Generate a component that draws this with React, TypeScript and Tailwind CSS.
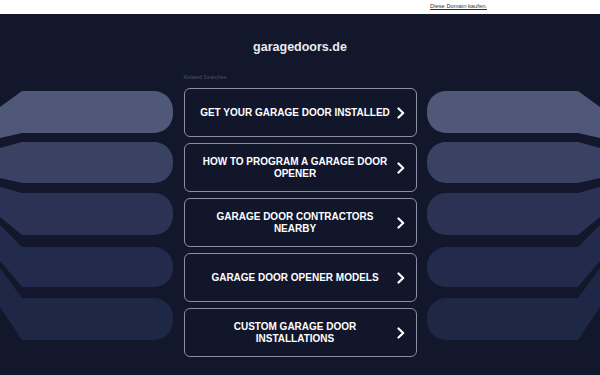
import React from "react";

const rows = [
  { T: 91, B: 133, Tp: 107, Bp: 138, c: "#4f5878" },
  { T: 142, B: 183, Tp: 148, Bp: 178, c: "#3a4264" },
  { T: 193, B: 235, Tp: 187, Bp: 217, c: "#2b3253" },
  { T: 247, B: 287, Tp: 225, Bp: 261, c: "#232b4c" },
  { T: 298, B: 340, Tp: 268, Bp: 307, c: "#1f2746" },
];

function leftPath(r: { T: number; B: number; Tp: number; Bp: number }) {
  const rad = 19;
  return `M0 ${r.Tp} L22 ${r.T} H${173 - rad} A${rad} ${rad} 0 0 1 173 ${r.T + rad} V${r.B - rad} A${rad} ${rad} 0 0 1 ${173 - rad} ${r.B} H22 L0 ${r.Bp} Z`;
}

function Side({ mirror }: { mirror?: boolean }) {
  return (
    <svg
      width="174"
      height="361"
      viewBox="0 14 174 361"
      className="flex-none block"
      style={mirror ? { transform: "scaleX(-1)" } : undefined}
    >
      {rows.map((r, i) => (
        <path key={i} d={leftPath(r)} fill={r.c} />
      ))}
    </svg>
  );
}

const items = [
  "GET YOUR GARAGE DOOR INSTALLED",
  "HOW TO PROGRAM A GARAGE DOOR OPENER",
  "GARAGE DOOR CONTRACTORS NEARBY",
  "GARAGE DOOR OPENER MODELS",
  "CUSTOM GARAGE DOOR INSTALLATIONS",
];

function Chevron() {
  return (
    <svg width="8" height="12" viewBox="0 0 8 12" className="flex-none">
      <polyline
        points="1.5,1.5 6.2,6 1.5,10.5"
        fill="none"
        stroke="#ffffff"
        strokeWidth="2.2"
        strokeLinecap="round"
        strokeLinejoin="round"
      />
    </svg>
  );
}

export default function App() {
  return (
    <div
      className="w-[600px] h-[375px] overflow-hidden bg-[#12172b]"
      style={{ fontFamily: '"Liberation Sans", Arial, sans-serif' }}
    >
      <div className="h-[14px] bg-white flex items-center justify-end pr-[113px]">
        <span className="text-[5.8px] leading-none text-[#333] underline">Diese Domain kaufen.</span>
      </div>
      <div className="flex">
        <Side />
        <div className="flex-1 flex flex-col items-center">
          <div className="mt-[25px] h-[16px] leading-[16px] text-[12.5px] font-bold text-[#e9eaef]">
            garagedoors.de
          </div>
          <div className="w-[233px] mt-[19px] h-[7px] leading-[7px] text-[5.4px] text-[#4a5068]">
            Related Searches
          </div>
          <div className="mt-[7px] flex flex-col gap-[6px]">
            {items.map((t) => (
              <div
                key={t}
                className="w-[233px] h-[49px] rounded-[6px] border-[1.5px] border-[#8a8fa2] bg-[#11162b] flex items-center pl-[13px] pr-[11px] gap-[4px]"
              >
                <div className="flex-1 text-center text-[10px] leading-[12px] font-bold text-white">
                  {t}
                </div>
                <Chevron />
              </div>
            ))}
          </div>
        </div>
        <Side mirror />
      </div>
    </div>
  );
}
